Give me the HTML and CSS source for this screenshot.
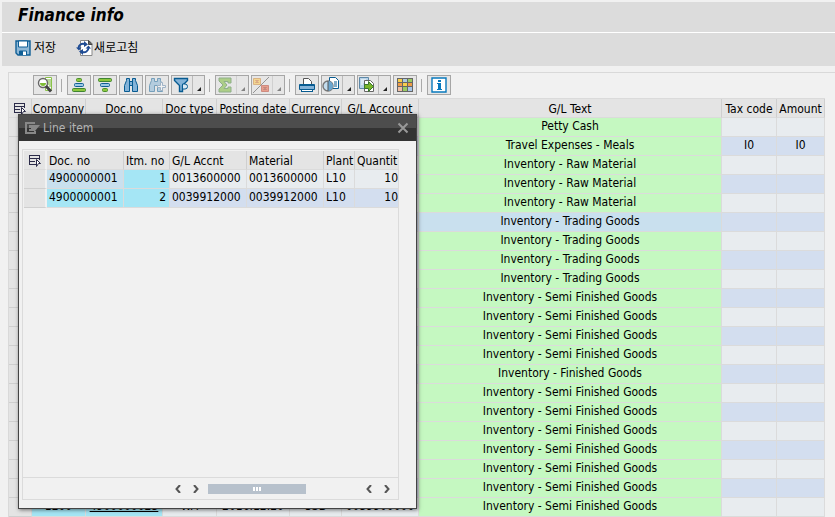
FILE: index.html
```html
<!DOCTYPE html>
<html lang="ko">
<head>
<meta charset="utf-8">
<title>Finance info</title>
<link rel="stylesheet" href="styles.css">
</head>
<body>
<header class="titlebar"><h1>Finance info</h1></header>
<nav class="actions" aria-label="Application">
  <button class="action" type="button">
    <svg width="16" height="16" viewBox="0 0 16 16"><path d="M1 1h14v14H3l-2-2z" fill="#8fb8d6" stroke="#0f5f96" stroke-width="1.400"/><path d="M3.500 1h9v6h-9z" fill="#fff" stroke="#0f5f96"/><path d="M4.500 15v-4h7v4" fill="#fff" stroke="#0f5f96"/><path d="M5 11h3v4H5z" fill="#0f5f96"/></svg>
    저장</button>
  <button class="action refresh" type="button">
    <svg width="17" height="16" viewBox="0 0 17 16"><path d="M4.500 .5H13l3 3v12H4.500z" fill="#fff" stroke="#888"/><path d="M12.500 .5v4H16z" fill="#666" stroke="#444"/><path d="M2.500 8a4.500 4.500 0 0 1 6-4" fill="none" stroke="#1f4c94" stroke-width="2"/><path d="M8 1l4 3.500L8 7zM0 7.500h5.500L3 10.500z" fill="#1f4c94"/><path d="M12.500 8a4.500 4.500 0 0 1-6 4" fill="none" stroke="#1f4c94" stroke-width="2"/><path d="M7 9v6l-4-3.500zM9.500 8.500H15l-2.500-3z" fill="#1f4c94"/></svg>
    새로고침</button>
</nav>

<main class="panel">
  <div class="toolbar" role="toolbar" aria-label="List">
    <button class="tool" type="button" aria-label="Details"><svg width="18" height="18" viewBox="0 0 18 18"><path d="M9.500 1.500h6v13h-6z" fill="#fff" stroke="#8bc34a"/><path d="M11 4h4M11 6h4M12 8h3M13 10h2" stroke="#6faf2c"/><circle cx="7" cy="7" r="4.500" fill="#fff" stroke="#666" stroke-width="1.400"/><path d="M4 7h6a3 3 0 0 1-6 0z" fill="#7fbd35"/><path d="M10 10l5 5.500" stroke="#444" stroke-width="3"/></svg></button>
    <span class="sep"></span>
    <button class="tool" type="button" aria-label="Sort ascending"><svg width="18" height="18" viewBox="0 0 18 18"><rect x="6.500" y="2.500" width="5" height="3" rx="1" fill="#8cc63e" stroke="#4a8f2c"/><rect x="4.500" y="7.500" width="9" height="3" rx="1" fill="#9cc8e4" stroke="#0f5f96"/><rect x="2.500" y="12.500" width="13" height="3" rx="1" fill="#8cc63e" stroke="#3f8532"/></svg></button>
    <button class="tool" type="button" aria-label="Sort descending"><svg width="18" height="18" viewBox="0 0 18 18"><rect x="2.500" y="2.500" width="13" height="3" rx="1" fill="#8cc63e" stroke="#3f8532"/><rect x="4.500" y="7.500" width="9" height="3" rx="1" fill="#9cc8e4" stroke="#0f5f96"/><rect x="6.500" y="12.500" width="5" height="3" rx="1" fill="#8cc63e" stroke="#4a8f2c"/></svg></button>
    <button class="tool" type="button" aria-label="Find"><svg width="18" height="18" viewBox="0 0 18 18"><path d="M4.500 2.500h3v3h3v-3h3v2l2 5v6h-5v-6h-3v6h-5v-6l2-5z" fill="#84b3d8" stroke="#075b91"/><path d="M7.500 5v5M10.500 5v5" stroke="#075b91"/></svg></button>
    <button class="tool" type="button" aria-label="Find next" disabled><svg width="18" height="18" viewBox="0 0 18 18"><path d="M3.500 2.500h3v3h3v-3h3v2l2 5v6h-5v-6h-3v6h-5v-6l2-5z" fill="#84b3d8" stroke="#075b91"/><path d="M12.500 6.500h2v3h3v2h-3v3h-2v-3h-3v-2h3z" fill="#fff" stroke="#5b82a8"/></svg></button>
    <button class="tool split" type="button" aria-label="Filter"><svg width="18" height="18" viewBox="0 0 18 18"><path d="M2.500 2.500h13v2l-5 5v6h-3v-6l-5-5z" fill="#84b3d8" stroke="#075b91" stroke-width="1.400"/><path d="M10.500 15V8H13a2 2 0 0 1 0 5h-2.500" fill="#dceaf4" stroke="#075b91"/></svg><i class="more"></i></button>
    <span class="sep"></span>
    <button class="tool split" type="button" aria-label="Total" disabled><svg width="18" height="18" viewBox="0 0 18 18"><path d="M3 2h12v5h-3V5.500H8L11 9l-3 3.500h4V11h3v5H3v-3l4-4-4-4z" fill="#76b82a" stroke="#3a7a30"/></svg><i class="more"></i></button>
    <button class="tool split" type="button" aria-label="Subtotals" disabled><svg width="18" height="18" viewBox="0 0 18 18"><path d="M1.500 2.500h7v6h-7z" fill="#ffc83e" stroke="#cf8122"/><path d="M6.500 5V4.500h-3l2 1-2 1h3V6" fill="none" stroke="#cf6a22"/><path d="M9.500 9.500h7v6h-7z" fill="#e85b36" stroke="#b8331c"/><path d="M14.500 12v-.5h-3l2 1-2 1h3V13" fill="none" stroke="#a02c18"/><path d="M17 1L1 17" stroke="#444"/></svg><i class="more"></i></button>
    <span class="sep"></span>
    <button class="tool" type="button" aria-label="Print"><svg width="18" height="18" viewBox="0 0 18 18"><path d="M5.500 8V2.500h5l3 3V8" fill="#fff" stroke="#555"/><path d="M1.500 8.500h15v5h-15z" fill="#84b3d8" stroke="#075b91"/><path d="M2 8h14v2H2zM3 13h12v3H3z" fill="#075b91"/><path d="M4 14h10v1H4z" fill="#fff"/></svg></button>
    <button class="tool split" type="button" aria-label="Views"><svg width="18" height="18" viewBox="0 0 18 18"><path d="M7.500 1.500h6l3 3v8h-9z" fill="#fff" stroke="#075b91"/><path d="M12 6h3M12 8h3M12 10h3" stroke="#075b91"/><circle cx="6" cy="10" r="5" fill="#c4ddee" stroke="#777" stroke-width="1.400"/><path d="M6 5a5 5 0 0 1 0 10z" fill="#6ba6cf"/><path d="M6 5v10" stroke="#555"/></svg><i class="more"></i></button>
    <button class="tool split" type="button" aria-label="Export"><svg width="18" height="18" viewBox="0 0 18 18"><path d="M1.500 1.500h9v11h-9z" fill="#b8d3e8" stroke="#5d88a8"/><path d="M3 4h5M3 6h3M3 8h2" stroke="#fff"/><path d="M6.500 4.500h6l3 3v8h-9z" fill="#fff" stroke="#666"/><path d="M6.500 8.500h4v-3l5 5-5 5v-3h-4z" fill="#79b52c" stroke="#39762d"/></svg><i class="more"></i></button>
    <button class="tool" type="button" aria-label="Layout"><svg width="18" height="18" viewBox="0 0 18 18"><path d="M1 2h16v14H1z" fill="#666"/><path d="M2 3h4v3H2zM7 7h4v3H7z" fill="#f8cf4b"/><path d="M7 3h4v3H7z" fill="#aecbe0"/><path d="M12 3h4v3h-4zM7 11h4v4H7z" fill="#9acb61"/><path d="M2 7h4v3H2zM12 7h4v3h-4z" fill="#ef9b46"/><path d="M2 11h4v4H2z" fill="#f0bfa4"/><path d="M12 11h4v4h-4z" fill="#a9c6e6"/></svg></button>
    <span class="sep"></span>
    <button class="tool" type="button" aria-label="Information"><svg width="18" height="18" viewBox="0 0 18 18"><path d="M2 2h14v14H2z" fill="#fff" stroke="#0879bd" stroke-width="1.400"/><path d="M8 4h3v2H8zM7 7h4v6h1v1H7v-1h1V8H7z" fill="#0879bd"/></svg></button>
  </div>

  <table class="grid main-grid">
    <colgroup><col class="w-sel"><col class="w-company"><col class="w-key"><col class="w-company"><col class="w-date"><col class="w-currency"><col class="w-key"><col class="w-text"><col class="w-tax"><col class="w-amount"></colgroup>
    <thead><tr><th><svg class="pick" width="14" height="14" viewBox="0 0 14 14"><path d="M1 1.500h11M1 4.500h10M1 7.500h6M1 10.500h7M1.500 2v9M11.500 2v4" stroke="#2b2b49" fill="none"/><path d="M8.500 5.500l4 4h-2l-2 3z" fill="#fff" stroke="#2b2b49"/></svg></th><th>Company</th><th>Doc.no</th><th>Doc type</th><th>Posting date</th><th>Currency</th><th>G/L Account</th><th>G/L Text</th><th>Tax code</th><th>Amount</th></tr></thead>
    <tbody id="rows"></tbody>
  </table>
</main>

<section class="dialog" role="dialog" aria-labelledby="dialog-title">
  <div class="dialog-head">
    <svg width="16" height="12" viewBox="0 0 16 12"><path d="M10 1H1v10h9V9" fill="none" stroke="#888" stroke-width="2"/><path d="M4 3h11l-5 6H4z" fill="#888"/><path d="M4 6h2v1H4z" fill="#333"/></svg>
    <h2 id="dialog-title">Line item</h2>
    <button class="close" type="button" aria-label="Close"><svg width="12" height="12" viewBox="0 0 12 12"><path d="M1.500 1.500l9 9M10.500 1.500l-9 9" stroke="#999" stroke-width="2"/></svg></button>
  </div>
  <div class="dialog-body">
    <div class="item-view">
      <table class="grid item-grid">
        <colgroup><col class="i-sel"><col class="w-key"><col class="i-item"><col class="w-key"><col class="w-key"><col class="i-plant"><col class="i-qty"></colgroup>
        <thead><tr><th><svg class="pick" width="14" height="14" viewBox="0 0 14 14"><path d="M1 1.500h11M1 4.500h10M1 7.500h6M1 10.500h7M1.500 2v9M11.500 2v4" stroke="#2b2b49" fill="none"/><path d="M8.500 5.500l4 4h-2l-2 3z" fill="#fff" stroke="#2b2b49"/></svg></th><th>Doc. no</th><th>Itm. no</th><th>G/L Accnt</th><th>Material</th><th>Plant</th><th>Quantit</th></tr></thead>
        <tbody>
          <tr><td class="sel"></td><td class="current">4900000001</td><td class="key num">1</td><td>0013600000</td><td>0013600000</td><td>L10</td><td class="num">10</td></tr>
          <tr><td class="sel"></td><td class="key">4900000001</td><td class="key num">2</td><td>0039912000</td><td>0039912000</td><td>L10</td><td class="num">10</td></tr>
        </tbody>
      </table>
    </div>
    <div class="scroller">
      <button type="button" aria-label="First"><svg width="6" height="8" viewBox="0 0 6 8"><path d="M5 0L1.500 4 5 8" fill="none" stroke="#555" stroke-width="2"/></svg></button>
      <button type="button" aria-label="Previous"><svg width="6" height="8" viewBox="0 0 6 8"><path d="M1 0l3.500 4L1 8" fill="none" stroke="#555" stroke-width="2"/></svg></button>
      <div class="track"><div class="thumb"><i></i><i></i><i></i></div></div>
      <button type="button" aria-label="Next"><svg width="6" height="8" viewBox="0 0 6 8"><path d="M5 0L1.500 4 5 8" fill="none" stroke="#555" stroke-width="2"/></svg></button>
      <button type="button" aria-label="Last"><svg width="6" height="8" viewBox="0 0 6 8"><path d="M1 0l3.500 4L1 8" fill="none" stroke="#555" stroke-width="2"/></svg></button>
    </div>
  </div>
</section>
<script src="rows.js"></script>
</body>
</html>
```
FILE: styles.css
```css
* { box-sizing: border-box; }
body {
  margin: 0;
  padding: 2px 0 0 2px;
  height: 100vh;
  overflow: hidden;
  background: #f1f1f1;
  color: #000;
  font: 12px/16px "DejaVu Sans Condensed", "Noto Sans CJK KR", sans-serif;
}
h1, h2 { margin: 0; }
button { font: inherit; color: inherit; border: 0; background: none; padding: 0; }
svg { display: block; flex: none; }
.titlebar { display: flex; height: 30px; padding: 0 16px; background: #dcdcdc; }
.titlebar h1 { font: italic bold 17px/26px "DejaVu Sans Condensed", sans-serif; }
.actions {
  display: flex;
  align-items: center;
  gap: 20px;
  height: 34px;
  padding: 0 13px 4px;
  border-top: 1px solid #fff;
  background: #dcdcdc;
}
.action { display: flex; align-items: center; gap: 3px; font-size: 12px; }
.action.refresh { gap: 1px; }
.panel { margin: 6px 0 0 6px; border: 1px solid #d9d9d9; border-width: 1px 0 0 1px; }
.toolbar { display: flex; align-items: center; gap: 2px; height: 25px; padding: 0 24px 1px; }
.tool {
  display: flex;
  align-items: center;
  justify-content: center;
  width: 24px;
  height: 20px;
  border: 1px solid #a6a6a6;
  background: #e6e6e6;
}
.tool.split { width: 34px; justify-content: space-between; }
.tool:disabled svg, .tool:disabled .more { opacity: .5; }
.more {
  display: flex;
  align-items: flex-end;
  justify-content: flex-end;
  width: 12px;
  height: 18px;
  padding: 3px;
  border-left: 1px solid #bbb;
}
.more::after { content: ""; border: 2px solid #222; border-top-color: transparent; border-left-color: transparent; }
.sep { width: 2px; height: 13px; margin: 0 2px; border-left: 1px solid #aaa; }

.grid { table-layout: fixed; border-collapse: separate; border-spacing: 0; }
.grid th, .grid td {
  height: 19px;
  padding: 0 0 2px;
  border: 1px solid #dbdbdb;
  border-width: 0 1px 1px 0;
  overflow: hidden;
  white-space: nowrap;
  font-weight: normal;
  line-height: 16px;
}
.grid th { background: #e4e4e4; border-right-color: #cfcfcf; }
.grid td { background: #e8ecef; }
.grid tr:nth-child(even) td { background: #d3deef; }
.grid .sel, .grid tr:nth-child(even) .sel { background: #e4e4e4; border-bottom-color: #cfcfcf; }
.grid .key, .grid tr:nth-child(even) .key { background: #a5e6f5; }
.grid .text, .grid tr:nth-child(even) .text { background: #c5f8c1; }
.grid .current, .grid tr:nth-child(even) .current { background: #c9e0ee; }
.pick { margin: 0 auto; }
.main-grid { width: 816px; border-top: 1px solid #dbdbdb; text-align: center; }
.main-grid th { padding: 1px 0 0; }
.main-grid a { color: inherit; }
.w-sel { width: 23px; }
.w-company { width: 54px; }
.w-key { width: 77px; }
.w-date { width: 73px; }
.w-currency { width: 52px; }
.w-text { width: 303px; }
.w-tax { width: 55px; }
.w-amount { width: 48px; }

.dialog {
  position: absolute;
  left: 18px;
  top: 114px;
  display: flex;
  flex-direction: column;
  width: 399px;
  height: 395px;
  border: 1px solid #444;
  background: #f1f1f1;
  box-shadow: 1px 1px 4px #0008;
}
.dialog-head {
  display: flex;
  align-items: center;
  gap: 2px;
  height: 26px;
  padding: 0 7px 0 6px;
  background: linear-gradient(#4d4d4d 50%, #333 50%);
}
.dialog-head h2 { flex: 1; color: #b4b4b4; font-weight: normal; font-size: 12px; }
.dialog-body {
  display: flex;
  flex: 1;
  flex-direction: column;
  margin: 8px 17px 8px 3px;
  border: 1px solid #dbdbdb;
}
.item-view { flex: 1; overflow: hidden; padding: 1px 0 0 1px; }
.item-grid { width: 375px; }
.item-grid th, .item-grid td { padding-left: 2px; text-align: left; }
.item-grid th:first-child, .item-grid td:first-child { padding-left: 0; border-right: 2px solid #f1f1f1; }
.item-grid th { padding-top: 1px; padding-bottom: 0; }
.grid .num { text-align: right; }
.i-sel { width: 23px; }
.i-item { width: 46px; }
.i-plant { width: 31px; }
.i-qty { width: 44px; }
.item-grid .num { padding-right: 3px; }
.item-grid .num:last-child { padding-right: 0; }
.scroller {
  display: flex;
  align-items: center;
  gap: 12px;
  height: 22px;
  padding: 0 8px 0 152px;
  border-top: 1px solid #dbdbdb;
}
.track { flex: 1; margin-left: -3px; }
.thumb { display: flex; align-items: center; justify-content: center; gap: 1px; width: 67%; height: 10px; background: #b7c1cc; }
.thumb i { width: 2px; height: 4px; background: #fff; }
```
FILE: rows.js
```js
const semi = "Inventory - Semi Finished Goods";
const raw = "Inventory - Raw Material";
const trading = "Inventory - Trading Goods";
const texts = ["Petty Cash", "Travel Expenses - Meals", raw, raw, raw,
  trading, trading, trading, trading, semi, semi, semi, semi,
  "Inventory - Finished Goods", semi, semi, semi, semi, semi, semi, semi];
const last = ["1200", '<a href="#">4900000023</a>', "WA", "2016.12.20", "USD", "0039900000"];

document.getElementById("rows").innerHTML = texts.map((text, i) => {
  const lead = i === texts.length - 1 ? last : Array(6).fill("");
  const tax = i === 1 ? "I0" : "";
  const cells = lead.map((v, n) => `<td class="${n < 2 ? "key" : ""}">${v}</td>`).join("");
  return `<tr><td class="sel"></td>${cells}<td class="${i === 5 ? "current" : "text"}">${text}</td><td>${tax}</td><td>${tax}</td></tr>`;
}).join("");
```
